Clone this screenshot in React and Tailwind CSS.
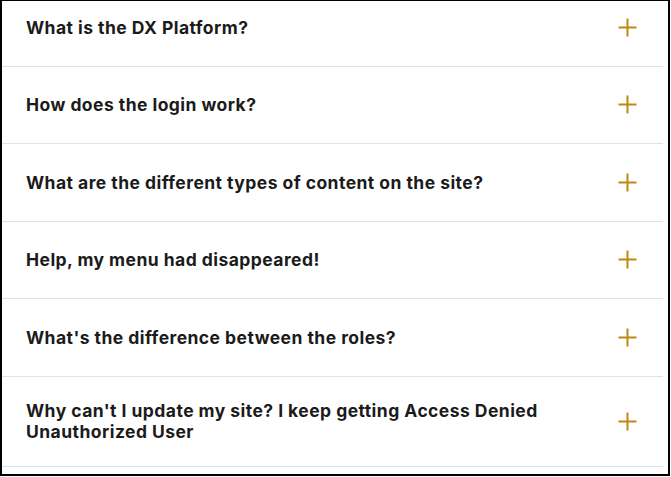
import React from "react";

const faqs = [
  "What is the DX Platform?",
  "How does the login work?",
  "What are the different types of content on the site?",
  "Help, my menu had disappeared!",
  "What's the difference between the roles?",
  "Why can't I update my site? I keep getting Access Denied Unauthorized User",
];

function PlusIcon() {
  return (
    <svg width="19" height="19" viewBox="0 0 19 19" fill="none">
      <path d="M9.5 0.5V18.5M0.5 9.5H18.5" stroke="#bf8712" strokeWidth="2" />
    </svg>
  );
}

export default function App() {
  return (
    <div className="w-[670px] h-[476px] bg-white border-l-2 border-r-2 border-b-2 border-t border-black overflow-hidden" style={{ fontFamily: "Inter, 'Open Sans', sans-serif" }}>
      <div className="-mt-[12px] mr-[5px]">
        {faqs.map((q) => (
          <button
            key={q}
            className="w-full flex items-center justify-between text-left pl-6 pr-[26px] py-[23.75px] border-b border-[#d8e6eb]"
          >
            <span className="min-h-[29px] flex items-center max-w-[570px] text-[17.5px] leading-[21px] tracking-[0.45px] font-bold text-[#1b1b1b]">
              {q}
            </span>
            <PlusIcon />
          </button>
        ))}
      </div>
    </div>
  );
}
